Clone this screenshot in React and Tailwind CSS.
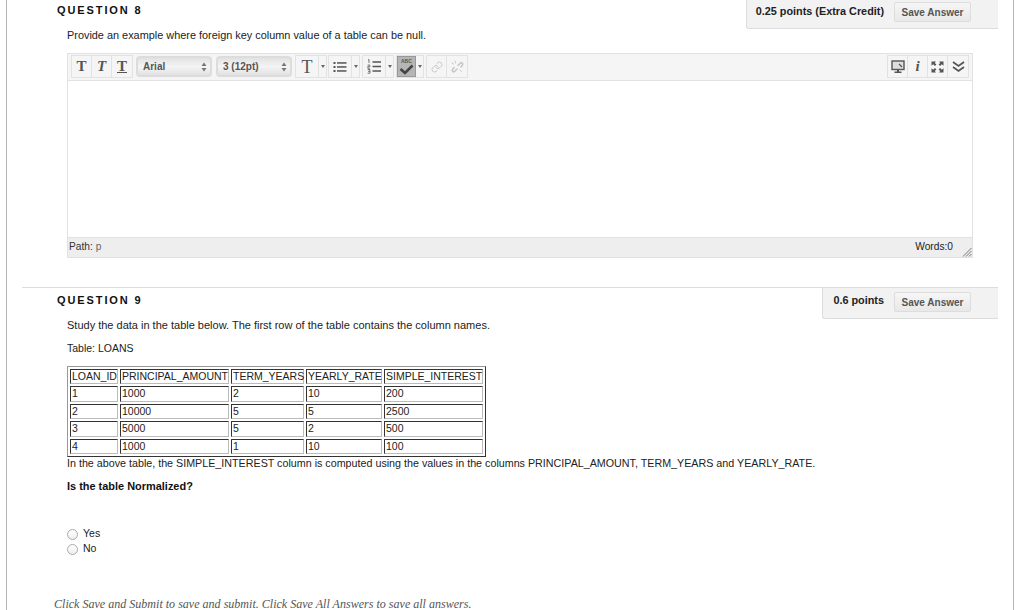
import { Link } from 'lucide-react'

const ROWS = [
  ['LOAN_ID', 'PRINCIPAL_AMOUNT', 'TERM_YEARS', 'YEARLY_RATE', 'SIMPLE_INTEREST'],
  ['1', '1000', '2', '10', '200'],
  ['2', '10000', '5', '5', '2500'],
  ['3', '5000', '5', '2', '500'],
  ['4', '1000', '1', '10', '100'],
]
const COLS = ['w-[48px]', 'w-[109px]', 'w-[73px]', 'w-[76px]', 'w-[99px]']

function Btn({ children, className = '' }) {
  return (
    <div className={`w-[20px] h-[21px] flex items-center justify-center border-r border-[#e2e2e2] last:border-r-0 ${className}`}>
      {children}
    </div>
  )
}

function Group({ children }) {
  return <div className="flex border border-[#e2e2e2] bg-[#f5f5f5] h-[21px] box-content -my-px">{children}</div>
}

function Caret() {
  return (
    <div className="w-[7px] h-[21px] flex items-center justify-center">
      <div className="w-0 h-0 border-x-[2.5px] border-x-transparent border-t-[3px] border-t-[#666]" />
    </div>
  )
}

function SelectBox({ label, className }) {
  return (
    <div className={`h-[21px] rounded-[4px] border-2 border-[#dcdcdc] bg-gradient-to-b from-[#e2e2e2] via-[#f4f4f4] to-[#e2e2e2] flex items-center justify-between pl-[5px] pr-[3px] text-[10px] font-bold text-[#555] ${className}`}>
      <span>{label}</span>
      <svg width="6" height="10" viewBox="0 0 6 10">
        <path d="M3 0.5 L5.5 4 H0.5 Z M3 9.5 L5.5 6 H0.5 Z" fill="#777" />
      </svg>
    </div>
  )
}

function SerifT({ className = '' }) {
  return <span className={`font-['Liberation_Serif',serif] text-[#555] leading-none ${className}`}>T</span>
}

function ListIcon() {
  return (
    <svg width="14" height="12" viewBox="0 0 14 12" fill="#555">
      <rect x="0.5" y="1" width="2" height="2" />
      <rect x="0.5" y="5" width="2" height="2" />
      <rect x="0.5" y="9" width="2" height="2" />
      <rect x="4" y="1.2" width="9.5" height="1.5" />
      <rect x="4" y="5.2" width="9.5" height="1.5" />
      <rect x="4" y="9.2" width="9.5" height="1.5" />
    </svg>
  )
}

function NumListIcon() {
  return (
    <svg width="15" height="15" viewBox="0 0 15 15" fill="none" stroke="#555" strokeWidth="0.8">
      <path d="M1 1 L2 0.5 V4" />
      <path d="M0.6 6 H2.8 V7.6 H0.8 V9.2 H3" />
      <path d="M0.6 10.5 H3 V14.2 H0.6 M1 12.3 H3" />
      <path d="M5.5 3 H14 M5.5 7.5 H14 M5.5 12 H14" strokeWidth="1.5" />
    </svg>
  )
}

function SpellButton() {
  return (
    <div className="relative w-[19px] h-[21px] bg-[#b5b5b5] border border-[#999] flex items-center justify-center">
      <span className="absolute top-[1px] left-[3px] text-[5px] leading-[6px] font-bold text-[#555]">ABC</span>
      <svg width="15" height="11" viewBox="0 0 15 11" className="mt-[6px]">
        <path d="M1.5 5 L6 9 L13.5 1.5" stroke="#444" strokeWidth="2.6" fill="none" />
      </svg>
    </div>
  )
}

function UnlinkIcon() {
  return (
    <svg width="15" height="14" viewBox="0 0 15 14" fill="none" stroke="#c6c6c6" strokeWidth="1.5" strokeLinecap="round">
      <path d="M8 5.5 L10.5 3 C11.5 2 13.5 3.5 12.5 5 L11 7" />
      <path d="M7 9 L4.5 11.5 C3.5 12.5 1.5 11 2.5 9.5 L4 7.5" />
      <path d="M5 1 L5.5 3 M2 3 L3.5 4 M10 10 L11.5 11.5" strokeWidth="1" />
    </svg>
  )
}

function MonitorIcon() {
  return (
    <svg width="14" height="14" viewBox="0 0 14 14" fill="none">
      <rect x="1" y="1" width="12" height="8.5" stroke="#555" strokeWidth="1.4" fill="#ddd" />
      <path d="M8 4 L11 7" stroke="#555" strokeWidth="1.3" />
      <path d="M6 9.5 H8 V11.5 H10.5 V13 H3.5 V11.5 H6 Z" fill="#555" />
    </svg>
  )
}

function FullscreenIcon() {
  return (
    <svg width="13" height="12" viewBox="0 0 13 12" fill="#555">
      <path d="M0.5 0.5 H5 L3.8 1.9 L5.4 3.6 L3.9 5 L2.2 3.3 L0.5 4.8 Z" />
      <path d="M12.5 0.5 H8 L9.2 1.9 L7.6 3.6 L9.1 5 L10.8 3.3 L12.5 4.8 Z" />
      <path d="M0.5 11.5 H5 L3.8 10.1 L5.4 8.4 L3.9 7 L2.2 8.7 L0.5 7.2 Z" />
      <path d="M12.5 11.5 H8 L9.2 10.1 L7.6 8.4 L9.1 7 L10.8 8.7 L12.5 7.2 Z" />
    </svg>
  )
}

function DoubleChevron() {
  return (
    <svg width="13" height="12" viewBox="0 0 13 12" fill="none" stroke="#555" strokeWidth="1.8">
      <path d="M1 1 L6.5 5 L12 1" />
      <path d="M1 6 L6.5 10 L12 6" />
    </svg>
  )
}

function Toolbar() {
  return (
    <div className="h-[27px] bg-[#f5f5f5] border-b border-[#e2e2e2] flex items-center pl-[3px] pr-[3px] pb-[1px]">
      <Group>
        <Btn><SerifT className="text-[15px] font-bold" /></Btn>
        <Btn><SerifT className="text-[15px] italic font-bold" /></Btn>
        <Btn><SerifT className="text-[15px] font-bold underline" /></Btn>
      </Group>
      <SelectBox label="Arial" className="w-[76px] ml-[3px]" />
      <SelectBox label="3 (12pt)" className="w-[76px] ml-[4px]" />
      <div className="ml-[3px]">
        <Group>
          <Btn className="w-[23px]"><SerifT className="text-[18px]" /></Btn>
          <Caret />
        </Group>
      </div>
      <div className="ml-[1px]">
        <Group>
          <Btn className="w-[23px]"><ListIcon /></Btn>
          <Caret />
        </Group>
      </div>
      <div className="ml-[2px]">
        <Group>
          <Btn className="w-[23px]"><NumListIcon /></Btn>
          <Caret />
        </Group>
      </div>
      <div className="ml-[2px]">
        <Group>
          <SpellButton />
          <Caret />
        </Group>
      </div>
      <div className="ml-[2px]">
        <Group>
          <Btn><Link size={12} strokeWidth={2} className="text-[#c6c6c6]" /></Btn>
          <Btn><UnlinkIcon /></Btn>
        </Group>
      </div>
      <div className="ml-auto">
        <Group>
          <Btn><MonitorIcon /></Btn>
          <Btn><span className="font-['Liberation_Serif',serif] italic font-bold text-[15px] leading-none text-[#555]">i</span></Btn>
          <Btn><FullscreenIcon /></Btn>
          <Btn><DoubleChevron /></Btn>
        </Group>
      </div>
    </div>
  )
}

function Editor() {
  return (
    <div className="ml-[45px] w-[906px] h-[205px] border border-[#e2e2e2] flex flex-col">
      <Toolbar />
      <div className="flex-1 bg-white" />
      <div className="h-[20px] bg-[#eeeeee] border-t border-[#e2e2e2] flex items-center justify-between pl-[1px] pb-[2px] text-[10.2px] text-[#333]">
        <span>Path: <span className="text-[#666]">p</span></span>
        <div className="flex items-center">
          <span className="text-[#222]">Words:0</span>
          <svg width="10" height="10" viewBox="0 0 10 10" className="ml-[9px] mt-[10px]" stroke="#777" strokeWidth="1">
            <path d="M1 9.5 L9.5 1 M4 9.5 L9.5 4 M7 9.5 L9.5 7" />
          </svg>
        </div>
      </div>
    </div>
  )
}

function SaveButton() {
  return (
    <div className="w-[77px] h-[20px] flex items-center justify-center rounded-[2px] border border-[#ddd] bg-gradient-to-b from-[#f6f6f6] to-[#e8e8e8] text-[10px] font-bold text-[#555]">
      Save Answer
    </div>
  )
}

function QuestionHeader({ number, points, boxClass, titleClass, pointsClass = '' }) {
  return (
    <div className="flex justify-between">
      <h2 className={`ml-[35px] text-[11px] leading-[13px] font-bold tracking-[1.9px] text-[#111] ${titleClass}`}>
        QUESTION {number}
      </h2>
      <div className={`flex items-start justify-end gap-[10px] pr-[27px] bg-[#f2f2f2] border-l border-b border-[#dcdcdc] rounded-bl-[3px] ${boxClass}`}>
        <span className={`text-[10.85px] leading-[17px] font-bold text-[#222] whitespace-nowrap ${pointsClass}`}>{points}</span>
        <SaveButton />
      </div>
    </div>
  )
}

function DataTable() {
  return (
    <table className="ml-[45px] border-separate border-spacing-[2px] border border-t-[#999] border-l-[#999] border-r-[#333] border-b-[#333] table-fixed w-[419px] text-[10.5px] leading-[13px] text-[#222]">
      <tbody>
        {ROWS.map((row, i) => (
          <tr key={i}>
            {row.map((cell, j) => (
              <td key={j} className={`${COLS[j]} ${i === 0 ? 'h-[15px]' : 'h-[15.5px]'} p-0 pl-[1px] border border-t-[#333] border-l-[#333] border-r-[#bbb] border-b-[#bbb] whitespace-nowrap`}>
                {cell}
              </td>
            ))}
          </tr>
        ))}
      </tbody>
    </table>
  )
}

function Radio({ label }) {
  return (
    <div className="flex items-center h-[15px] text-[10.5px] text-[#222]">
      <div className="w-[11px] h-[11px] mt-[1px] rounded-full border border-[#aaa] bg-gradient-to-b from-white to-[#eee]" />
      <span className="ml-[5px]">{label}</span>
    </div>
  )
}

export default function App() {
  return (
    <div className="ml-[6px] w-[1008px] h-[610px] overflow-hidden bg-white border-x border-[#b5b5b5] font-['Liberation_Sans',Arial,sans-serif]">
      <div className="ml-[15px] mr-[15px]">
        {/* Question 8 */}
        <QuestionHeader number="8" points="0.25 points (Extra Credit)" boxClass="w-[252px] h-[29px] pt-[2px]" titleClass="mt-[4px]" pointsClass="mt-[1px]" />
        <p className="ml-[45px] h-[24px] text-[10.9px] leading-[13px] text-[#222]">
          Provide an example where foreign key column value of a table can be null.
        </p>
        <Editor />

        {/* Question 9 */}
        <div className="mt-[29px] border-t border-[#dcdcdc]">
          <QuestionHeader number="9" points="0.6 points" boxClass="w-[176px] h-[31px] pt-[4px]" titleClass="mt-[6px]" />
          <p className="ml-[45px] text-[11px] leading-[13px] text-[#222]">
            Study the data in the table below. The first row of the table contains the column names.
          </p>
          <p className="ml-[45px] mt-[10px] text-[10.5px] leading-[13px] text-[#222]">Table: LOANS</p>
          <div className="mt-[11px]">
            <DataTable />
          </div>
          <p className="ml-[45px] text-[10.72px] leading-[13px] text-[#222]">
            In the above table, the SIMPLE_INTEREST column is computed using the values in the columns PRINCIPAL_AMOUNT, TERM_YEARS and YEARLY_RATE.
          </p>
          <p className="ml-[45px] mt-[10px] text-[10.95px] leading-[13px] font-bold text-[#111]">Is the table Normalized?</p>
          <div className="ml-[45px] mt-[33px]">
            <Radio label="Yes" />
            <Radio label="No" />
          </div>
          <p className="ml-[32px] mt-[41px] font-['Liberation_Serif',serif] italic text-[12.05px] leading-[14px] text-[#555]">
            Click Save and Submit to save and submit. Click Save All Answers to save all answers.
          </p>
        </div>
      </div>
    </div>
  )
}
